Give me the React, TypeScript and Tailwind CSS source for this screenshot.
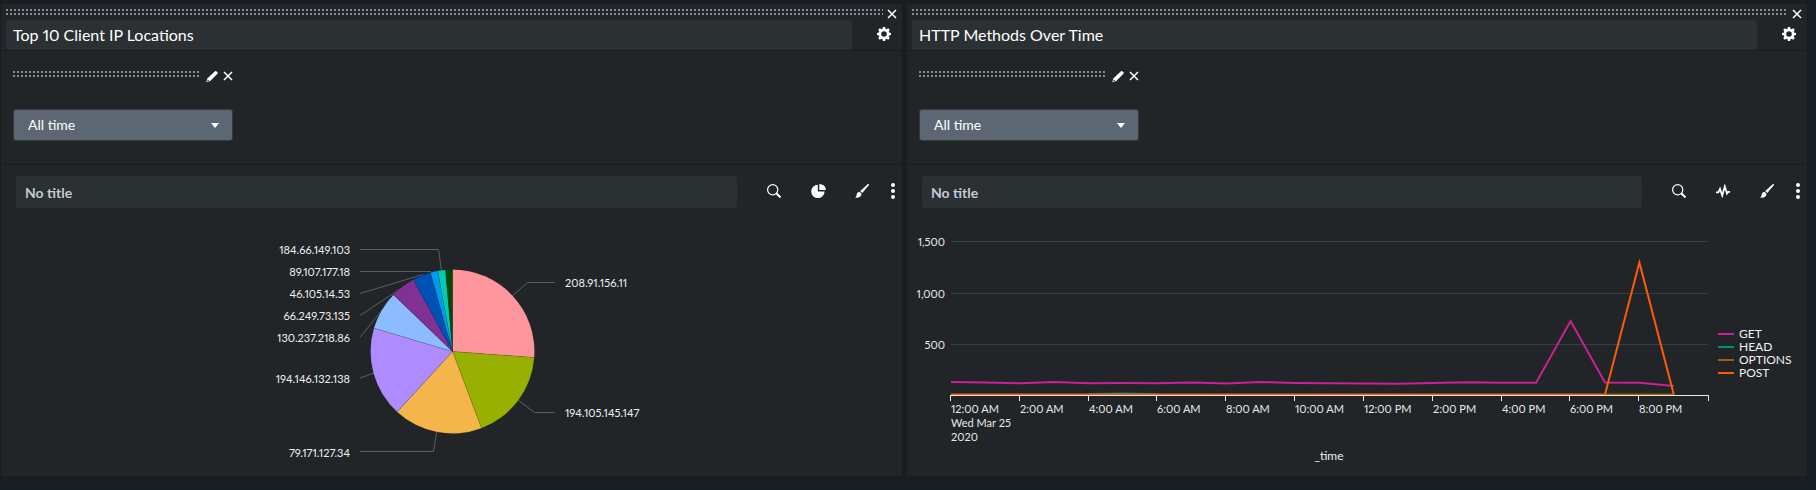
import { useState, type ReactNode } from "react";

const dots =
  "h-[6px] bg-[linear-gradient(transparent_2px,#212527_2px),linear-gradient(90deg,#858e99_2px,transparent_2px)] bg-[length:4px_4px]";

function CloseIcon() {
  return (
    <svg className="block h-[10px] w-[10px]" viewBox="0 0 10 10" aria-hidden="true">
      <path d="M1 1l8 8M9 1L1 9" stroke="#fff" strokeWidth="1.5" fill="none" />
    </svg>
  );
}

function GearIcon() {
  const teeth = [0, 45, 90, 135, 180, 225, 270, 315];
  return (
    <svg className="block h-[14px] w-[14px]" viewBox="0 0 14 14" aria-hidden="true">
      <circle cx="7" cy="7" r="4.1" fill="none" stroke="#fff" strokeWidth="2.6" />
      {teeth.map((a) => (
        <path key={a} d="M5.4 2.4L5.9 0h2.2l.5 2.4z" fill="#fff" transform={`rotate(${a} 7 7)`} />
      ))}
    </svg>
  );
}

function PencilIcon() {
  return (
    <svg className="block h-[12px] w-[12px]" viewBox="0 0 12 12" aria-hidden="true">
      <path
        fill="#fff"
        fillRule="evenodd"
        d="M8.7.5a1.3 1.3 0 0 1 1.9 0l.6.6a1.3 1.3 0 0 1 0 1.900L4.300 10.100.3 11.300 1.300 7.500zM1.900 8.400l-.7 2 2-.6z"
      />
    </svg>
  );
}

function SearchIcon() {
  return (
    <svg className="block h-[14px] w-[14px]" viewBox="0 0 14 14" aria-hidden="true">
      <circle cx="5.7" cy="5.7" r="5.1" fill="none" stroke="#fff" strokeWidth="1.2" />
      <path d="M9.300 9.300l4.200 4.200" stroke="#fff" strokeWidth="2" />
    </svg>
  );
}

function PieIcon() {
  return (
    <svg className="block h-[14px] w-[14px] overflow-visible" viewBox="0 0 14 14" aria-hidden="true">
      <path fill="#fff" d="M6.800.7v6.800h6.800A6.700 6.700 0 1 1 6.800.7z" />
      <path fill="#fff" d="M8.300 0a6.400 6.400 0 0 1 6.700 6H8.300z" />
    </svg>
  );
}

function PulseIcon() {
  return (
    <svg className="block h-[14px] w-[14px]" viewBox="0 0 14 14" aria-hidden="true">
      <path
        d="M0 8.300h2.300L4 4.800l2.200 6.700L8.800 2.500l2.200 7 1.200-1.700H14"
        fill="none"
        stroke="#fff"
        strokeWidth="1.8"
      />
    </svg>
  );
}

function BrushIcon() {
  return (
    <svg className="block h-[14px] w-[14px]" viewBox="0 0 14 14" aria-hidden="true">
      <path fill="#fff" d="M13.800.2c.4.4.2.9-.2 1.400L7.300 9.100 5.200 7 12.400.5c.5-.4 1-.6 1.400-.3z" />
      <path fill="#fff" d="M4.500 7.700l2 2c0 2.700-2.400 4.400-6.400 4 1.500-.8 1.100-2 1.700-3.700.5-1.400 1.500-2.200 2.700-2.300z" />
    </svg>
  );
}

function MoreIcon() {
  return (
    <svg className="block h-[16px] w-[4px]" viewBox="0 0 4 16" aria-hidden="true">
      <circle cx="2" cy="2" r="2" fill="#fff" />
      <circle cx="2" cy="8" r="2" fill="#fff" />
      <circle cx="2" cy="14" r="2" fill="#fff" />
    </svg>
  );
}

function IconButton({ label, children }: { label: string; children: ReactNode }) {
  return (
    <button type="button" aria-label={label} className="block shrink-0 cursor-pointer">
      {children}
    </button>
  );
}

const slices = [
  { from: 0, to: 94.2, color: "#ff969e" },
  { from: 94.2, to: 159.3, color: "#98b001" },
  { from: 159.3, to: 222.5, color: "#f4b54a" },
  { from: 222.5, to: 286.6, color: "#ae8cff" },
  { from: 286.6, to: 313.9, color: "#8cbbff" },
  { from: 313.9, to: 331.5, color: "#813193" },
  { from: 331.5, to: 344.4, color: "#0051b5" },
  { from: 344.4, to: 349.7, color: "#009ceb" },
  { from: 349.7, to: 355.1, color: "#00cdaf" },
  { from: 355.1, to: 360, color: "#00490a" },
];

const callouts = [
  { ip: "208.91.156.11", y: 79, end: false, line: "511,88 526.5,74.5 554,74.5" },
  { ip: "194.105.145.147", y: 209, end: false, line: "517,192 533.5,204.5 554,204.5" },
  { ip: "79.171.127.34", y: 249, end: true, line: "359,243.5 432.5,243.5 435.7,224" },
  { ip: "194.146.132.138", y: 175, end: true, line: "359,170 373,165" },
  { ip: "130.237.218.86", y: 134, end: true, line: "359,129.5 381,102" },
  { ip: "66.249.73.135", y: 112, end: true, line: "359,107.5 402,79" },
  { ip: "46.105.14.53", y: 90, end: true, line: "359,85.5 422,66.5" },
  { ip: "89.107.177.18", y: 68, end: true, line: "359,63.5 430,63.5" },
  { ip: "184.66.149.103", y: 46, end: true, line: "359,41.5 437.5,41.5 440.5,63" },
];

function slicePath(from: number, to: number) {
  const cx = 451.5;
  const cy = 143.5;
  const r = 82;
  const point = (deg: number) => {
    const a = (deg * Math.PI) / 180;
    return `${(cx + r * Math.sin(a)).toFixed(2)} ${(cy - r * Math.cos(a)).toFixed(2)}`;
  };
  return `M${cx} ${cy}L${point(from)}A${r} ${r} 0 0 1 ${point(to)}Z`;
}

function PieChart() {
  return (
    <svg className="block h-[268px] w-full" viewBox="0 0 901 268" role="img" aria-label="Client IP locations">
      {callouts.map((c) => (
        <polyline key={c.ip} points={c.line} fill="none" stroke="#5c6063" />
      ))}
      {slices.map((s) => (
        <path key={s.color} d={slicePath(s.from, s.to)} fill={s.color} stroke="#000" strokeOpacity="0.2" strokeWidth="0.5" />
      ))}
      <g className="fill-[#f0f1f2] text-[11px]">
        {callouts.map((c) => (
          <text key={c.ip} x={c.end ? 349 : 564} y={c.y} textAnchor={c.end ? "end" : "start"}>
            {c.ip}
          </text>
        ))}
      </g>
    </svg>
  );
}

const ticks = [43.5, 112.5, 181.5, 249.5, 318.5, 387.5, 456.5, 525.5, 594.5, 662.5, 731.5, 801.5];
const hours = [
  "12:00 AM", "2:00 AM", "4:00 AM", "6:00 AM", "8:00 AM", "10:00 AM",
  "12:00 PM", "2:00 PM", "4:00 PM", "6:00 PM", "8:00 PM",
];
const grid = [
  { y: 33.5, label: "1,500" },
  { y: 85.5, label: "1,000" },
  { y: 136.5, label: "500" },
];
const getLine = [
  174, 174.4, 175.3, 174.1, 175.3, 175, 175.3, 174.6, 175.5, 174.1, 174.9,
  175.3, 175.4, 175.8, 174.9, 174.3, 174.8, 174.8, 113, 174.5, 174.7, 178,
];
const postLine = [...Array(19).fill(186.5), 186.5, 54.5, 186.5];
const legend = [
  { name: "GET", y: 126, color: "#cb2196" },
  { name: "HEAD", y: 139, color: "#008c80" },
  { name: "OPTIONS", y: 152, color: "#a05f04" },
  { name: "POST", y: 165, color: "#ff5a0a" },
];

function toPoints(values: number[]) {
  return values.map((v, i) => `${(44 + i * 34.42).toFixed(1)},${v}`).join(" ");
}

function LineChart() {
  return (
    <svg className="block h-[268px] w-full" viewBox="0 0 900 268" role="img" aria-label="HTTP methods over time">
      {grid.map((g) => (
        <path key={g.y} d={`M44 ${g.y}H801`} stroke="#324146" />
      ))}
      <g fill="none" strokeWidth="2">
        <polyline points={toPoints(getLine)} stroke="#cb2196" />
        <path d="M182 186.300l34.400-.8 34.400.8" stroke="#008c80" />
        <path d="M698 186.500H767" stroke="#a05f04" />
        <polyline points={toPoints(postLine)} stroke="#ff5a0a" />
        {legend.map((l) => (
          <path key={l.name} d={`M811 ${l.y}h16`} stroke={l.color} />
        ))}
      </g>
      <path d="M43 187.500H802" stroke="#e8e9ea" />
      {ticks.map((x) => (
        <path key={x} d={`M${x} 187V193`} stroke="#e8e9ea" />
      ))}
      <g className="fill-[#e8e9ea] text-[11px]">
        {grid.map((g) => (
          <text key={g.y} x="38" y={g.y + 4.5} textAnchor="end">
            {g.label}
          </text>
        ))}
        {hours.map((h, i) => (
          <text key={h} x={ticks[i] + 0.5} y="205">
            {h}
          </text>
        ))}
        <text x="44" y="219">Wed Mar 25</text>
        <text x="44" y="233">2020</text>
      </g>
      <g className="fill-[#f0f1f2] text-[12px]">
        <text x="422" y="252" textAnchor="middle">
          _time
        </text>
        {legend.map((l) => (
          <text key={l.name} x="832" y={l.y + 4}>
            {l.name}
          </text>
        ))}
      </g>
    </svg>
  );
}

function Panel({ name, vizIcon, children }: { name: string; vizIcon: ReactNode; children: ReactNode }) {
  const [title, setTitle] = useState(name);
  return (
    <section className="min-w-0 bg-[#212527]">
      <header className="border-b border-[#171c1f]">
        <div className="flex h-4 items-start gap-1 pt-[5px] pr-[5px] pl-[5px]">
          <div className={`${dots} flex-1`} />
          <IconButton label="Remove panel">
            <CloseIcon />
          </IconButton>
        </div>
        <div className="flex items-center gap-[25px] pr-[11px] pl-[5px]">
          <input
            aria-label="Panel title"
            value={title}
            onChange={(e) => setTitle(e.target.value)}
            className="h-[30px] min-w-0 flex-1 rounded-[3px] bg-[#2b3033] px-[7px] pb-[2px] text-[16px] text-white outline-none"
          />
          <div className="pb-[2px]">
            <IconButton label="Panel settings">
              <GearIcon />
            </IconButton>
          </div>
        </div>
      </header>

      <div className="border-b border-[#171c1f] pt-5 pb-[23px] pl-3">
        <div className="w-[220px]">
          <div className="flex h-3 items-start">
            <div className={`${dots} flex-1`} />
            <div className="flex items-start gap-[5px] pl-[6px]">
              <IconButton label="Edit input">
                <PencilIcon />
              </IconButton>
              <IconButton label="Remove input">
                <CloseIcon />
              </IconButton>
            </div>
          </div>
          <div className="relative mt-[26px]">
            <select
              aria-label="Time range"
              className="block h-8 w-full appearance-none rounded-[3px] border border-[#343b41] bg-[#5c6773] px-[14px] pb-[2px] text-[14px] text-white outline-none"
            >
              <option>All time</option>
            </select>
            <svg
              className="pointer-events-none absolute top-[14px] right-[14px] h-[5px] w-[8px]"
              viewBox="0 0 8 5"
              aria-hidden="true"
            >
              <path d="M0 0h8L4 5z" fill="#fff" />
            </svg>
          </div>
        </div>
      </div>

      <div className="flex items-center pt-[11px] pr-[7px] pl-[15px]">
        <input
          aria-label="Visualization title"
          placeholder="No title"
          className="h-8 min-w-0 flex-1 rounded-[3px] bg-[#2b3033] px-[9px] text-[14px] font-bold text-white outline-none placeholder:text-[#c3cbd4]"
        />
        <div className="flex items-center gap-[30px] pr-[22px] pb-[2px] pl-[30px]">
          <IconButton label="Edit search">
            <SearchIcon />
          </IconButton>
          <IconButton label="Select visualization">{vizIcon}</IconButton>
          <IconButton label="Format visualization">
            <BrushIcon />
          </IconButton>
        </div>
        <div className="pb-[2px]">
          <IconButton label="More actions">
            <MoreIcon />
          </IconButton>
        </div>
      </div>
      {children}
    </section>
  );
}

export default function App() {
  return (
    <main className="min-h-screen bg-[#171d21] pt-1 pr-[9px] pb-[14px] pl-px font-['Lato','Open_Sans',sans-serif] proportional-nums">
      <div className="grid grid-cols-[901fr_900fr] gap-[5px]">
        <Panel name="Top 10 Client IP Locations" vizIcon={<PieIcon />}>
          <PieChart />
        </Panel>
        <Panel name="HTTP Methods Over Time" vizIcon={<PulseIcon />}>
          <LineChart />
        </Panel>
      </div>
    </main>
  );
}
